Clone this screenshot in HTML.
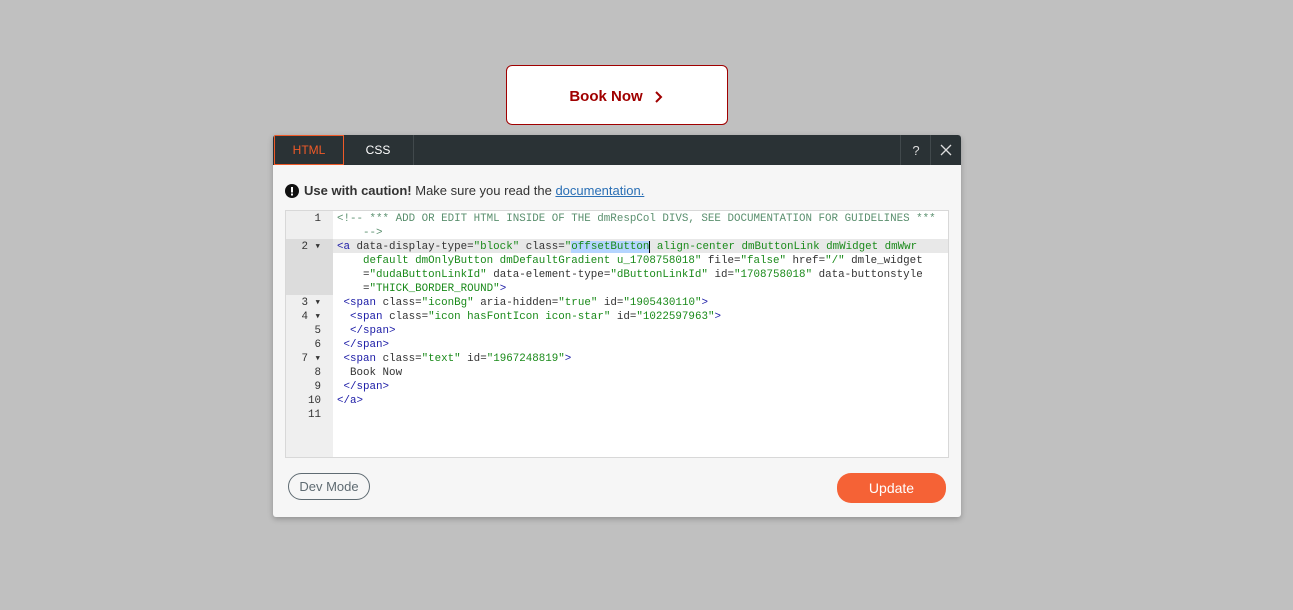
<!DOCTYPE html>
<html><head><meta charset="utf-8"><style>
*{box-sizing:border-box;margin:0;padding:0}
body{width:1293px;height:610px;background:#c0c0c0;position:relative;font-family:"Liberation Sans",sans-serif;overflow:hidden}
.book{position:absolute;left:506px;top:65px;width:222px;height:60px;background:#fff;border:1px solid #a00000;border-radius:6px;color:#a00000;font-weight:bold;font-size:15px;display:flex;align-items:center;justify-content:center;padding-top:3px}
.dlg{position:absolute;left:273px;top:135px;width:688px;height:382px;background:#f6f6f6;border-radius:3px;box-shadow:0 2px 6px rgba(0,0,0,.25);overflow:hidden}
.hdr{height:30px;background:#2a3235;position:relative}
.tab{position:absolute;top:0;height:30px;color:#fff;font-size:12px;display:flex;align-items:center;justify-content:center}
.t1{left:1px;width:70px;border:1px solid #f05a28;color:#f05a28}
.t2{left:70px;width:71px;border-right:1px solid #41494c}
.hb{position:absolute;top:0;height:30px;width:31px;border-left:1px solid #41494c;color:#ddd;display:flex;align-items:center;justify-content:center;font-size:13px}
.warn{position:absolute;left:12px;top:48px;font-size:13px;color:#333;display:flex;align-items:center}
.ed{position:absolute;left:12px;top:75px;width:664px;height:248px;background:#fff;border:1px solid #d8d8d8}
.gut{position:absolute;left:0;top:0;width:47px;height:100%;background:#efefef}
.code{font-family:"Liberation Mono",monospace;font-size:10.85px;line-height:14px;white-space:pre;position:absolute;left:0;top:1px;width:100%}
.ln{position:absolute;left:0;width:47px;text-align:right;padding-right:12px;color:#333}
.cl{position:absolute;left:51px;color:#333}
.c{color:#5a8f6e}.t{color:#1a1aa6}.s{color:#1a8a1a}
.sel{background:#b5d5ff;border-right:1.5px solid #000}
.btn{position:absolute;top:338px;height:27px;border-radius:14px;font-size:14px;display:flex;align-items:center;justify-content:center}
</style></head><body>
<div class="book">Book Now<svg width="12" height="14" viewBox="0 0 12 14" style="margin-left:10px"><path d="M3 2 L8 7 L3 12" stroke="#a00000" stroke-width="2" fill="none"/></svg></div>
<div class="dlg">
<div class="hdr"><div class="tab t1">HTML</div><div class="tab t2">CSS</div>
<div class="hb" style="left:627px">?</div><div class="hb" style="left:657px"><svg width="12" height="12"><path d="M1 1L11 11M11 1L1 11" stroke="#ddd" stroke-width="1.3"/></svg></div></div>
<div class="warn"><svg width="14" height="14" viewBox="0 0 14 14" style="margin-right:5px"><circle cx="7" cy="7" r="7" fill="#111"/><rect x="6" y="3" width="2" height="5.5" fill="#fff"/><rect x="6" y="9.5" width="2" height="2" fill="#fff"/></svg><b>Use with caution!</b>&nbsp;Make sure you read the&nbsp;<span style="color:#2a6fb5;text-decoration:underline">documentation.</span></div>
<div class="ed">
<div class="gut"></div>
<div style="position:absolute;left:0;top:28px;width:47px;height:56px;background:#dcdcdc"></div>
<div style="position:absolute;left:47px;top:28px;right:0;height:14px;background:#e8e8e8"></div>
<div class="code">
<div class="ln" style="top:0">1</div>
<div class="ln" style="top:28px">2 ▾</div>
<div class="ln" style="top:84px">3 ▾</div>
<div class="ln" style="top:98px">4 ▾</div>
<div class="ln" style="top:112px">5</div>
<div class="ln" style="top:126px">6</div>
<div class="ln" style="top:140px">7 ▾</div>
<div class="ln" style="top:154px">8</div>
<div class="ln" style="top:168px">9</div>
<div class="ln" style="top:182px">10</div>
<div class="ln" style="top:196px">11</div>
<div class="cl" style="top:0"><span class="c">&lt;!-- *** ADD OR EDIT HTML INSIDE OF THE dmRespCol DIVS, SEE DOCUMENTATION FOR GUIDELINES ***
    --&gt;</span>
<span class="t">&lt;a</span> data-display-type=<span class="s">"block"</span> class=<span class="s">"<span class="sel">offsetButton</span> align-center dmButtonLink dmWidget dmWwr
    default dmOnlyButton dmDefaultGradient u_1708758018"</span> file=<span class="s">"false"</span> href=<span class="s">"/"</span> dmle_widget
    =<span class="s">"dudaButtonLinkId"</span> data-element-type=<span class="s">"dButtonLinkId"</span> id=<span class="s">"1708758018"</span> data-buttonstyle
    =<span class="s">"THICK_BORDER_ROUND"</span><span class="t">&gt;</span>
 <span class="t">&lt;span</span> class=<span class="s">"iconBg"</span> aria-hidden=<span class="s">"true"</span> id=<span class="s">"1905430110"</span><span class="t">&gt;</span>
  <span class="t">&lt;span</span> class=<span class="s">"icon hasFontIcon icon-star"</span> id=<span class="s">"1022597963"</span><span class="t">&gt;</span>
  <span class="t">&lt;/span&gt;</span>
 <span class="t">&lt;/span&gt;</span>
 <span class="t">&lt;span</span> class=<span class="s">"text"</span> id=<span class="s">"1967248819"</span><span class="t">&gt;</span>
  Book Now
 <span class="t">&lt;/span&gt;</span>
<span class="t">&lt;/a&gt;</span>
</div></div></div>
<div class="btn" style="left:15px;width:82px;border:1px solid #5f6b72;color:#5f6b72;font-size:13px">Dev Mode</div>
<div class="btn" style="left:564px;width:109px;height:30px;top:338px;background:#f56236;color:#fff;font-size:14px">Update</div>
</div>
</body></html>
